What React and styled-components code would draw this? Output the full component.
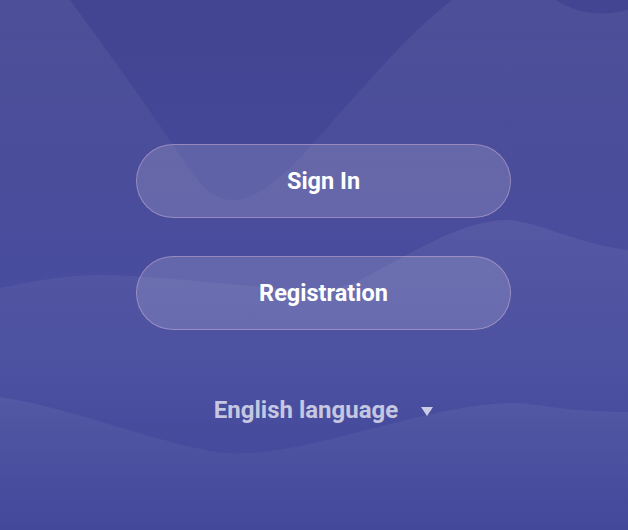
import React from "react";
import styled, { createGlobalStyle } from "styled-components";

const GlobalStyle = createGlobalStyle`
  html, body {
    margin: 0;
    padding: 0;
    height: 100%;
  }
  body {
    font-family: Roboto, "Liberation Sans", Arial, sans-serif;
    -webkit-font-smoothing: antialiased;
  }
  #root {
    height: 100%;
  }
`;

// background waves, drawn behind the page content
const Backdrop = () => (
  <Waves viewBox="0 0 628 530" preserveAspectRatio="none">
    <defs>
      <linearGradient id="waveTop" gradientUnits="userSpaceOnUse" x1="0" y1="0" x2="0" y2="320">
        <stop offset="0" stopColor="#fff" stopOpacity="0.055" />
        <stop offset="1" stopColor="#fff" stopOpacity="0.015" />
      </linearGradient>
      <linearGradient id="waveMid" gradientUnits="userSpaceOnUse" x1="0" y1="220" x2="0" y2="430">
        <stop offset="0" stopColor="#fff" stopOpacity="0.065" />
        <stop offset="1" stopColor="#fff" stopOpacity="0" />
      </linearGradient>
      <linearGradient id="waveLow" gradientUnits="userSpaceOnUse" x1="0" y1="400" x2="0" y2="530">
        <stop offset="0" stopColor="#fff" stopOpacity="0.06" />
        <stop offset="1" stopColor="#fff" stopOpacity="0" />
      </linearGradient>
    </defs>
    <path
      fill="url(#waveTop)"
      d="M0,0 L70,0 C110,55 150,110 190,170 C205,192 220,202 238,200 C258,197 280,178 300,158 C340,115 400,40 452,0 L556,0 C575,13 600,17 628,10 L628,530 L0,530 Z"
    />
    <path
      fill="url(#waveMid)"
      d="M0,288 C40,280 70,275 100,275 C160,276 230,285 290,289 C320,291 340,289 360,280 C410,255 460,220 508,220 C540,222 580,245 628,250 L628,530 L0,530 Z"
    />
    <path
      fill="url(#waveLow)"
      d="M0,397 C80,410 160,445 224,453 C300,460 420,405 512,403 C540,403 560,412 628,412 L628,530 L0,530 Z"
    />
  </Waves>
);

const Welcome = () => (
  <Page>
    <Backdrop />
    <Content>
      <ButtonStack>
        <PillButton type="button">Sign In</PillButton>
        <PillButton type="button">Registration</PillButton>
      </ButtonStack>
      <LanguageSelect type="button">
        <span>English language</span>
        <Caret viewBox="0 0 12 9">
          <polygon points="0,0 12,0 6,9" />
        </Caret>
      </LanguageSelect>
    </Content>
  </Page>
);

export default function App() {
  return (
    <>
      <GlobalStyle />
      <Welcome />
    </>
  );
}

const Page = styled.div`
  position: relative;
  height: 100vh;
  overflow: hidden;
  background: linear-gradient(
    180deg,
    #434592 0%,
    #45489a 45%,
    #464b9e 70%,
    #404599 100%
  );
`;

const Waves = styled.svg`
  position: absolute;
  inset: 0;
  width: 100%;
  height: 100%;
  display: block;
`;

const Content = styled.div`
  position: relative;
  display: flex;
  flex-direction: column;
  align-items: center;
  padding-top: 144px;
  padding-left: 19px;
`;

const ButtonStack = styled.div`
  display: flex;
  flex-direction: column;
  gap: 38px;
`;

const PillButton = styled.button`
  box-sizing: border-box;
  width: 375px;
  height: 74px;
  border-radius: 37px;
  border: 1px solid rgba(230, 190, 225, 0.4);
  background: rgba(255, 255, 255, 0.15);
  color: #fff;
  font-family: Roboto, "Liberation Sans", Arial, sans-serif;
  font-size: 23.5px;
  font-weight: 700;
  cursor: pointer;
  padding: 0;
`;

const LanguageSelect = styled.button`
  margin-top: 67px;
  display: flex;
  align-items: center;
  gap: 23px;
  padding: 0;
  border: none;
  background: none;
  color: rgba(255, 255, 255, 0.7);
  font-family: Roboto, "Liberation Sans", Arial, sans-serif;
  font-size: 24px;
  font-weight: 700;
  line-height: 26px;
  cursor: pointer;
`;

const Caret = styled.svg`
  width: 12px;
  height: 9px;
  fill: rgba(255, 255, 255, 0.72);
  margin-top: 2px;
`;
